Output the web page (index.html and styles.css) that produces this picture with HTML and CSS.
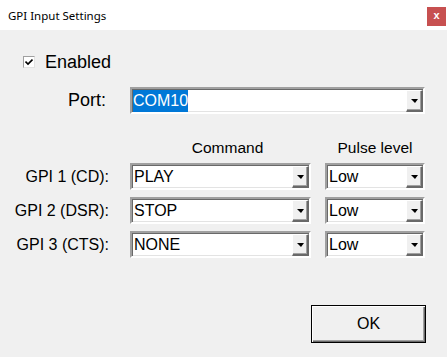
FILE: index.html
```html
<!DOCTYPE html>
<html lang="en">
<head>
    <meta charset="UTF-8">
    <title>GPI Input Settings</title>
    <link rel="stylesheet" href="styles.css">
</head>
<body>
    <div class="window">
        <div class="titlebar">
            <span class="title">GPI Input Settings</span>
            <span class="close">x</span>
        </div>

        <div class="content">
            <label class="check-row">
                <span class="checkbox">
                    <svg width="8" height="8" viewBox="0 0 8 8">
                        <polyline points="0.5,3.5 3,6 7.5,1.5" fill="none" stroke="#000" stroke-width="1.6"/>
                    </svg>
                </span>
                <span>Enabled</span>
            </label>

            <div class="port-row">
                <span class="port-label">Port:</span>
                <div class="combo port-combo">
                    <span class="combo-text"><span class="selected">COM10</span></span>
                    <span class="drop"><span class="arrow"></span></span>
                </div>
            </div>

            <div class="gpi-grid">
                <span></span>
                <span class="col-head">Command</span>
                <span class="col-head">Pulse level</span>

                <span class="gpi-label">GPI 1 (CD):</span>
                <div class="combo cmd"><span class="combo-text">PLAY</span><span class="drop"><span class="arrow"></span></span></div>
                <div class="combo pulse"><span class="combo-text">Low</span><span class="drop"><span class="arrow"></span></span></div>

                <span class="gpi-label">GPI 2 (DSR):</span>
                <div class="combo cmd"><span class="combo-text">STOP</span><span class="drop"><span class="arrow"></span></span></div>
                <div class="combo pulse"><span class="combo-text">Low</span><span class="drop"><span class="arrow"></span></span></div>

                <span class="gpi-label">GPI 3 (CTS):</span>
                <div class="combo cmd"><span class="combo-text">NONE</span><span class="drop"><span class="arrow"></span></span></div>
                <div class="combo pulse"><span class="combo-text">Low</span><span class="drop"><span class="arrow"></span></span></div>
            </div>

            <div class="button-row">
                <button class="ok-btn">OK</button>
            </div>
        </div>
    </div>
</body>
</html>
```

FILE: styles.css
```css
* {
    margin: 0;
    padding: 0;
    box-sizing: border-box;
}

body {
    font-family: 'Liberation Sans', Arial, sans-serif;
    color: #000;
    background: #f0f0f0;
}

.window {
    width: 447px;
    height: 357px;
    display: flex;
    flex-direction: column;
    background: #f0f0f0;
}

.titlebar {
    height: 30px;
    background: #fff;
    display: flex;
    align-items: center;
    justify-content: space-between;
}

.title {
    font-family: 'Noto Sans', 'Open Sans', sans-serif;
    font-size: 11.5px;
    padding-left: 8px;
    color: #000;
}

.close {
    align-self: flex-start;
    margin-top: 7px;
    margin-right: 1px;
    width: 19px;
    height: 19px;
    background: #c75050;
    color: #fff;
    font-weight: bold;
    font-size: 11px;
    line-height: 17px;
    text-align: center;
}

.content {
    flex: 1;
    display: flex;
    flex-direction: column;
    padding: 22px 21px 14px 0;
}

.check-row {
    display: flex;
    align-items: center;
    height: 20px;
    margin-left: 23px;
    font-size: 18px;
    line-height: 20px;
    gap: 10px;
}

.checkbox {
    width: 12px;
    height: 12px;
    background: #fff;
    border: 1px solid;
    border-color: #a0a0a0 #e3e3e3 #e3e3e3 #a0a0a0;
    display: flex;
    align-items: center;
    justify-content: center;
}

.port-row {
    display: flex;
    align-items: center;
    margin-top: 15px;
}

.port-label {
    width: 106px;
    margin-right: 24px;
    text-align: right;
    font-size: 18px;
}

.combo {
    height: 27px;
    display: flex;
    background: #fff;
    border: 2px solid;
    border-color: #a0a0a0 #fff #fff #a0a0a0;
    box-shadow: inset 1px 1px #696969, inset -1px -1px #e3e3e3;
}

.port-combo {
    width: 295px;
}

.combo-text {
    flex: 1;
    font-size: 16px;
    line-height: 23px;
    padding-left: 2px;
    white-space: nowrap;
}

.port-combo .combo-text {
    padding-left: 1px;
}

.selected {
    display: inline-block;
    background: #0078d7;
    color: #fff;
    height: 22px;
    line-height: 22px;
}

.drop {
    width: 17px;
    background: #f0f0f0;
    border-top: 1px solid #fff;
    border-left: 1px solid #fff;
    border-right: 2px solid #696969;
    border-bottom: 2px solid #696969;
    box-shadow: inset -1px -1px #a0a0a0;
    display: flex;
    align-items: center;
    justify-content: center;
    margin: 1px 0 0 0;
}

.arrow {
    width: 0;
    height: 0;
    border-left: 4px solid transparent;
    border-right: 3px solid transparent;
    border-top: 4px solid #000;
}

.gpi-grid {
    display: grid;
    grid-template-columns: 130px 195px 100px;
    row-gap: 7px;
    align-items: center;
    margin-top: 25px;
    font-size: 16px;
}

.col-head {
    font-size: 15.5px;
    line-height: 17px;
    text-align: center;
}

.gpi-label {
    text-align: right;
    padding-right: 21px;
}

.cmd {
    width: 181px;
}

.pulse {
    width: 100px;
}

.button-row {
    margin-top: auto;
    display: flex;
    justify-content: flex-end;
}

.ok-btn {
    width: 115px;
    height: 38px;
    font-family: 'Liberation Sans', Arial, sans-serif;
    font-size: 16px;
    color: #000;
    background: #f0f0f0;
    border: 1px solid #000;
    box-shadow: inset 1px 1px #fff, inset -1px -1px #696969, inset -2px -2px #a0a0a0;
}
```
